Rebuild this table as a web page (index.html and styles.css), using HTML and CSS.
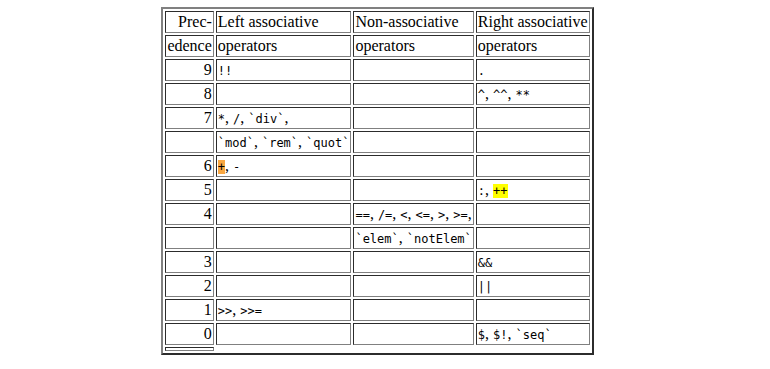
FILE: index.html
```html
<!DOCTYPE html>
<html lang="en">
<head>
    <meta charset="UTF-8">
    <title>Operator precedence</title>
    <link rel="stylesheet" href="styles.css">
</head>
<body>
    <table class="prec">
        <tr>
            <td class="lvl">Prec-</td>
            <td>Left associative</td>
            <td>Non-associative</td>
            <td>Right associative</td>
        </tr>
        <tr>
            <td class="lvl">edence</td>
            <td>operators</td>
            <td>operators</td>
            <td>operators</td>
        </tr>
        <tr>
            <td class="lvl">9</td>
            <td><code>!!</code></td>
            <td></td>
            <td><code>.</code></td>
        </tr>
        <tr>
            <td class="lvl">8</td>
            <td></td>
            <td></td>
            <td><code>^</code>, <code>^^</code>, <code>**</code></td>
        </tr>
        <tr>
            <td class="lvl">7</td>
            <td><code>*</code>, <code>/</code>, <code>`div`</code>,</td>
            <td></td>
            <td></td>
        </tr>
        <tr>
            <td class="lvl"></td>
            <td><code>`mod`</code>, <code>`rem`</code>, <code>`quot`</code></td>
            <td></td>
            <td></td>
        </tr>
        <tr>
            <td class="lvl">6</td>
            <td><code class="hl-orange">+</code>, <code>-</code></td>
            <td></td>
            <td></td>
        </tr>
        <tr>
            <td class="lvl">5</td>
            <td></td>
            <td></td>
            <td><code>:</code>, <code class="hl-yellow">++</code></td>
        </tr>
        <tr>
            <td class="lvl">4</td>
            <td></td>
            <td><code>==</code>, <code>/=</code>, <code>&lt;</code>, <code>&lt;=</code>, <code>&gt;</code>, <code>&gt;=</code>,</td>
            <td></td>
        </tr>
        <tr>
            <td class="lvl"></td>
            <td></td>
            <td><code>`elem`</code>, <code>`notElem`</code></td>
            <td></td>
        </tr>
        <tr>
            <td class="lvl">3</td>
            <td></td>
            <td></td>
            <td><code>&amp;&amp;</code></td>
        </tr>
        <tr>
            <td class="lvl">2</td>
            <td></td>
            <td></td>
            <td><code>||</code></td>
        </tr>
        <tr>
            <td class="lvl">1</td>
            <td><code>&gt;&gt;</code>, <code>&gt;&gt;=</code></td>
            <td></td>
            <td></td>
        </tr>
        <tr>
            <td class="lvl">0</td>
            <td></td>
            <td></td>
            <td><code>$</code>, <code>$!</code>, <code>`seq`</code></td>
        </tr>
        <tr>
            <td class="lvl"></td>
        </tr>
    </table>
</body>
</html>
```

FILE: styles.css
```css
body {
    margin: 7px 23px 8px 8px;
    font-family: "Liberation Serif", "Times New Roman", serif;
    font-size: 16px;
    color: #000;
    background: #fff;
}

.prec {
    margin: 0 auto;
    border: 2px outset grey;
    border-spacing: 2px;
}

.prec td {
    border: 1px inset grey;
    padding: 1px;
    white-space: nowrap;
}

.prec td.lvl {
    text-align: right;
}

code {
    font-family: "DejaVu Sans Mono", monospace;
    font-size: 12px;
}

.hl-orange {
    background: #f8a742;
}

.hl-yellow {
    background: #ffff00;
}
```
